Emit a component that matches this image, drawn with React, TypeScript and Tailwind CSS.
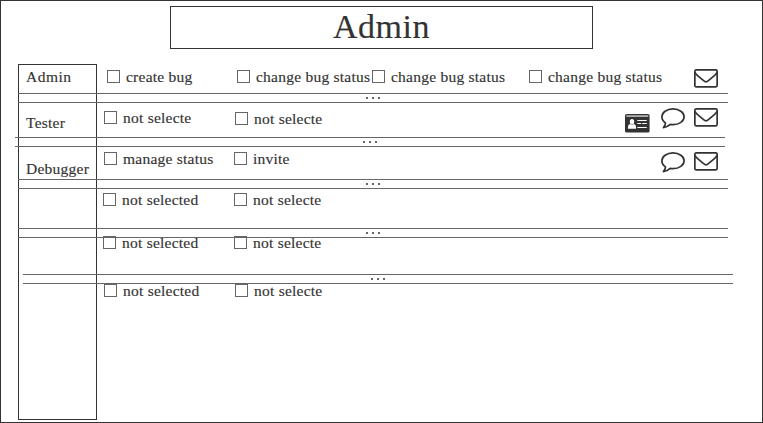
import React from "react";

type Option = { label: string; gap: string };

function Check({ label, gap }: Option) {
  return (
    <div className={`flex h-[13px] shrink-0 items-start ${gap}`}>
      <span className="h-[13px] w-[13px] shrink-0 border border-[#666]" />
      <span className="ml-1.5 h-[13px] w-0 whitespace-nowrap text-[15.5px] leading-[13px] tracking-[0.24px]">
        {label}
      </span>
    </div>
  );
}

function Splitter({ offset }: { offset: string }) {
  return (
    <div
      className={`flex h-[10px] w-[710px] shrink-0 items-center justify-center gap-1 border-y border-[#666] ${offset}`}
    >
      <i className="h-0.5 w-0.5 bg-[#666]" />
      <i className="h-0.5 w-0.5 bg-[#666]" />
      <i className="h-0.5 w-0.5 bg-[#666]" />
    </div>
  );
}

function Mail({ className }: { className: string }) {
  return (
    <svg className={`h-[19px] w-6 shrink-0 ${className}`} viewBox="0 0 24 19" fill="none" stroke="#333" strokeWidth="1.7">
      <rect x=".85" y=".85" width="22.3" height="17" rx="1.3" />
      <path d="M1 3.4C1.6 4.8 2.5 5.7 3.6 6.6L9.3 11.3C10.5 12.4 11.3 12.9 12 12.9s1.5-.5 2.7-1.6L20.4 6.6C21.5 5.7 22.4 4.8 23 3.4" />
    </svg>
  );
}

function Comment({ className }: { className: string }) {
  return (
    <svg className={`h-[21px] w-6 shrink-0 ${className}`} viewBox="0 0 24 21" fill="none" stroke="#333" strokeWidth="1.7" strokeLinejoin="round">
      <path d="M12 .9C18.2.9 23.1 4.5 23.1 8.8S18.2 16.7 12 16.7q-1.4 0-2.8-.3C7.3 18.2 5 19.3 2.4 19.7c1.2-1.3 2-2.8 2.1-4.8C2.2 13.4.9 11.3.9 8.8.9 4.5 5.8.9 12 .9Z" />
    </svg>
  );
}

function IdCard({ className }: { className: string }) {
  return (
    <svg className={`h-[19px] w-[25px] shrink-0 ${className}`} viewBox="0 0 25 19">
      <rect x="0" y="0" width="24.6" height="18.6" rx="1.6" fill="#333" />
      <path d="M1.3 1.5h22v1.1h-22z" fill="#fff" />
      <g fill="#fff">
        <ellipse cx="7" cy="7.7" rx="2.2" ry="2.7" />
        <path d="M3 14.8v-2q0-2.6 2-2.9 2 1.5 4 0 2 .3 2 2.9v2zM12.3 6h9.4v1h-9.4zM12.3 9h3.8v1h-3.8zM17.2 9h4.5v1h-4.5zM12.3 13h9.4v1h-9.4z" />
      </g>
    </svg>
  );
}

export default function App() {
  return (
    <main className="flex h-[423px] w-[763px] flex-col overflow-hidden border border-[#333] bg-white font-['Liberation_Serif',serif] text-[#333] [-webkit-text-stroke:0.15px_#333]">
      <h1 className="ml-[169px] mt-[5px] flex h-[43px] w-[423px] shrink-0 items-center justify-center border border-[#333] pb-0.5 text-[34px] leading-none tracking-[0.5px]">
        Admin
      </h1>
      <div className="mt-[15px] grid grid-cols-[744px]">
        <aside className="col-start-1 row-start-1 ml-[17px] flex h-[356px] w-[79px] flex-col border border-[#333] pl-[7px] text-[15.5px] leading-[46px] tracking-[0.25px]">
          <span className="-mt-[11px] tracking-[0.5px]">Admin</span>
          <span>Tester</span>
          <span>Debugger</span>
        </aside>
        <section className="col-start-1 row-start-1 flex h-[356px] flex-col">
          <div className="flex h-[29px] shrink-0 items-start pt-1.5">
            <Check label="create bug" gap="ml-[106px]" />
            <Check label="change bug status" gap="ml-[111px]" />
            <Check label="change bug status" gap="ml-[116px]" />
            <Check label="change bug status" gap="ml-[138px]" />
            <Mail className="-mt-px ml-[146px]" />
          </div>
          <Splitter offset="ml-[17px]" />
          <div className="flex h-[34px] shrink-0 items-start pt-1">
            <Check label="not selecte" gap="ml-[103px] mt-1" />
            <Check label="not selecte" gap="ml-[112px] mt-[5px]" />
            <IdCard className="ml-[371px] mt-[7px]" />
            <Comment className="ml-[11px] mt-[1px]" />
            <Mail className="ml-[9px] mt-[1px]" />
          </div>
          <Splitter offset="ml-[14px]" />
          <div className="flex h-8 shrink-0 items-start pt-1">
            <Check label="manage status" gap="ml-[103px] mt-px" />
            <Check label="invite" gap="ml-[111px] mt-px" />
            <Comment className="ml-[408px] mt-[1px]" />
            <Mail className="ml-[9px] mt-[1px]" />
          </div>
          <Splitter offset="ml-[17px]" />
          <div className="flex h-[39px] shrink-0 items-start pt-1">
            <Check label="not selected" gap="ml-[102px]" />
            <Check label="not selecte" gap="ml-[112px]" />
          </div>
          <Splitter offset="ml-[17px]" />
          <div className="-mt-0.5 flex h-[38px] shrink-0 items-start">
            <Check label="not selected" gap="ml-[102px]" />
            <Check label="not selecte" gap="ml-[112px]" />
          </div>
          <Splitter offset="ml-[22px]" />
          <div className="flex items-start">
            <Check label="not selected" gap="ml-[103px]" />
            <Check label="not selecte" gap="ml-[112px]" />
          </div>
        </section>
      </div>
    </main>
  );
}
